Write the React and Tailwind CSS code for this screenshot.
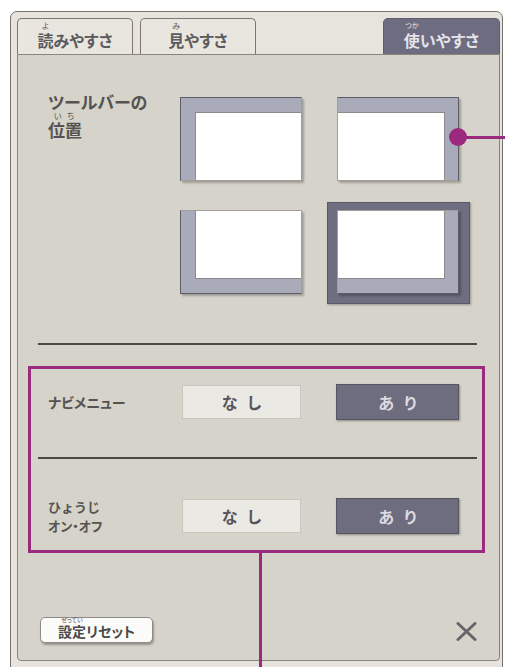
import React from "react";

function Rb({ base, rt, rtClass = "" }) {
  return (
    <span className="relative inline-block">
      {base}
      <span
        className={
          "absolute left-0 right-0 text-center whitespace-nowrap font-normal leading-none " +
          rtClass
        }
      >
        {rt}
      </span>
    </span>
  );
}

function ToolBox({ bars }) {
  const t = bars.includes("t");
  const l = bars.includes("l");
  const r = bars.includes("r");
  const b = bars.includes("b");
  const dark = "#5d5c68";
  const light = "#a39d98";
  return (
    <div
      className="w-[122px] h-[84px] bg-[#a9abba] border flex shadow-[2px_2px_2px_rgba(0,0,0,0.25)]"
      style={{
        borderTopColor: t ? dark : light,
        borderLeftColor: l ? dark : light,
        borderRightColor: r ? dark : light,
        borderBottomColor: b ? dark : light,
        paddingTop: t ? 14 : 0,
        paddingLeft: l ? 14 : 0,
        paddingRight: r ? 13 : 0,
        paddingBottom: b ? 14 : 0,
      }}
    >
      <div
        className="flex-1 bg-white"
        style={{
          borderTop: t ? "1px solid #8f8a88" : "none",
          borderLeft: l ? "1px solid #8f8a88" : "none",
          borderRight: r ? "1px solid #8f8a88" : "none",
          borderBottom: b ? "1px solid #8f8a88" : "none",
        }}
      />
    </div>
  );
}

export default function App() {
  return (
    <div className="w-[505px] h-[667px] bg-white relative overflow-hidden font-['Noto_Sans_CJK_JP',sans-serif] [font-feature-settings:'palt'] text-[#555351]">
      {/* outer frame */}
      <div className="mt-[11px] ml-[10px] w-[493px] h-[700px] border border-[#77726d] rounded-t-[7px] bg-[#e6e4dd] pl-[6px] pr-[2px] pt-[6px]">
        {/* tabs */}
        <div className="flex h-[36px]">
          <div className="w-[116px] h-full border border-b-0 border-[#7b7672] rounded-t-[5px] bg-[#e8e6df] flex items-center justify-center pt-[6px] text-[16px] font-bold text-[#5c5a5c]">
            <Rb base="読" rt="よ" rtClass="text-[8px] -top-[6px]" />
            みやすさ
          </div>
          <div className="ml-[7px] w-[116px] h-full border border-b-0 border-[#7b7672] rounded-t-[5px] bg-[#e8e6df] flex items-center justify-center pt-[6px] text-[16px] font-bold text-[#5c5a5c]">
            <Rb base="見" rt="み" rtClass="text-[8px] -top-[6px]" />
            やすさ
          </div>
          <div className="ml-auto w-[117px] h-full border border-b-0 border-[#5f5e70] rounded-t-[5px] bg-[#6d6c80] flex items-center justify-center pt-[6px] text-[16px] font-bold text-[#e4e3ea]">
            <Rb base="使" rt="つか" rtClass="text-[7px] -top-[6px]" />
            いやすさ
          </div>
        </div>

        {/* panel */}
        <div className="h-[607px] border border-[#8a867f] rounded-b-[4px] bg-[#d6d3ca]">
          {/* section 1 */}
          <div className="flex h-[288px]">
            <div className="w-[152px] pl-[30px] pt-[36px] text-[17px] leading-[22px] font-bold">
              <div>ツールバーの</div>
              <div className="mt-[6px]">
                <Rb base="位置" rt="い ち" rtClass="text-[8px] -top-[7px] tracking-[2px]" />
              </div>
            </div>
            <div className="pt-[32px]">
              <div className="grid grid-cols-[142px_143px] gap-x-[15px] gap-y-[9px]">
                <div className="p-[10px]">
                  <ToolBox bars="tl" />
                </div>
                <div className="p-[10px]">
                  <ToolBox bars="tr" />
                </div>
                <div className="p-[10px]">
                  <ToolBox bars="lb" />
                </div>
                <div className="mt-[2px] pt-[8px] pb-[9px] pl-[10px] pr-[11px] bg-[#6f6e80] border border-[#5a596a] self-start shadow-[1px_1px_2px_rgba(0,0,0,0.3)]">
                  <div className="-ml-[1px] -mt-[1px]">
                    <ToolBox bars="rb" />
                  </div>
                </div>
              </div>
            </div>
          </div>

          {/* divider */}
          <div className="ml-[20px] w-[439px] h-[2px] bg-[#4a4845]" />

          {/* purple annotated box */}
          <div className="mt-[21px] ml-[10px] w-[457px] h-[187px] border-[3px] border-[#9b2a7e]">
            {/* row 1 */}
            <div className="h-[88px] flex items-start pl-[17px] pt-[16px]">
              <div className="w-[134px] h-[34px] flex items-center text-[14px] font-bold">
                ナビメニュー
              </div>
              <div className="w-[119px] h-[34px] bg-[#ebe9e4] border border-[#c9c6bf] flex items-center justify-center text-[16px] font-bold tracking-[10px] pl-[10px] text-[#57555a]">
                なし
              </div>
              <div className="ml-[35px] -mt-[1px] w-[123px] h-[36px] bg-[#6e6d80] border border-[#55545f] shadow-[1px_1px_2px_rgba(0,0,0,0.35)] flex items-center justify-center text-[16px] font-bold tracking-[10px] pl-[10px] text-[#dcdbe2]">
                あり
              </div>
            </div>
            {/* divider 2 */}
            <div className="ml-[7px] w-[439px] h-[2px] bg-[#4a4845]" />
            {/* row 2 */}
            <div className="flex items-start pl-[17px] pt-[40px]">
              <div className="w-[134px] h-[34px] flex flex-col justify-center text-[14px] leading-[19px] font-bold">
                <div className="[font-feature-settings:normal] text-[13px]">ひょうじ</div>
                <div className="text-[13px]">オン・オフ</div>
              </div>
              <div className="w-[119px] h-[34px] bg-[#ebe9e4] border border-[#c9c6bf] flex items-center justify-center text-[16px] font-bold tracking-[10px] pl-[10px] text-[#57555a]">
                なし
              </div>
              <div className="ml-[35px] -mt-[1px] w-[123px] h-[36px] bg-[#6e6d80] border border-[#55545f] shadow-[1px_1px_2px_rgba(0,0,0,0.35)] flex items-center justify-center text-[16px] font-bold tracking-[10px] pl-[10px] text-[#dcdbe2]">
                あり
              </div>
            </div>
          </div>

          {/* bottom row */}
          <div className="mt-[64px] flex items-start">
            <div className="ml-[22px] w-[113px] h-[26px] rounded-[5px] bg-[#fbfbfa] border border-[#8f8a85] shadow-[1px_2px_2px_rgba(0,0,0,0.3)] flex items-center justify-center pt-[3px] text-[14px] font-bold text-[#4c4a48]">
              <Rb base="設定" rt="せってい" rtClass="text-[6px] -top-[4px]" />
              リセット
            </div>
            <div className="ml-auto mr-[22px] mt-[5px]">
              <svg width="21" height="19" viewBox="0 0 21 19">
                <path d="M2 1.5 L19 17.5 M19 1.5 L2 17.5" stroke="#66656c" strokeWidth="3" strokeLinecap="round" />
              </svg>
            </div>
          </div>
        </div>
      </div>

      {/* annotations */}
      <div className="absolute left-[449px] top-[128px] w-[18px] h-[18px] rounded-full bg-[#9b2a7e]" />
      <div className="absolute left-[462px] top-[136px] w-[43px] h-[3px] bg-[#9b2a7e]" />
      <div className="absolute left-[259px] top-[553px] w-[3px] h-[114px] bg-[#9b2a7e]" />
    </div>
  );
}
